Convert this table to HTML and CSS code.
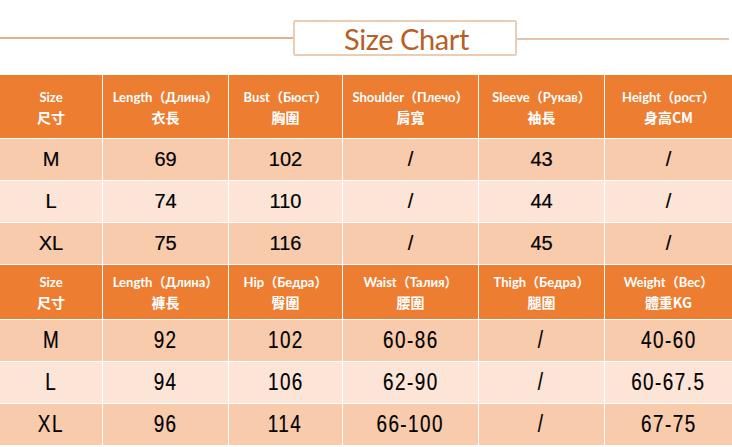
FILE: index.html
```html
<!DOCTYPE html>
<html>
<head>
<meta charset="utf-8">
<link rel="stylesheet" href="styles.css">
</head>
<body>
<div class="title-row">
  <div class="rule rule-left"></div>
  <div class="title-box">Size Chart</div>
  <div class="rule rule-right"></div>
</div>
<div class="table">
  <div class="hd hd1"><span>Size</span><span class="zh">尺寸</span></div>
  <div class="hd hd1"><span>Length（Длина）</span><span class="zh">衣長</span></div>
  <div class="hd hd1"><span>Bust（Бюст）</span><span class="zh">胸圍</span></div>
  <div class="hd hd1"><span>Shoulder（Плечо）</span><span class="zh">肩寬</span></div>
  <div class="hd hd1"><span>Sleeve（Рукав）</span><span class="zh">袖長</span></div>
  <div class="hd hd1"><span>Height（рост）</span><span class="zh">身高CM</span></div>

  <div class="c dark">M</div><div class="c dark">69</div><div class="c dark">102</div><div class="c dark">/</div><div class="c dark">43</div><div class="c dark">/</div>
  <div class="c light">L</div><div class="c light">74</div><div class="c light">110</div><div class="c light">/</div><div class="c light">44</div><div class="c light">/</div>
  <div class="c dark">XL</div><div class="c dark">75</div><div class="c dark">116</div><div class="c dark">/</div><div class="c dark">45</div><div class="c dark">/</div>

  <div class="hd hd2"><span>Size</span><span class="zh">尺寸</span></div>
  <div class="hd hd2"><span>Length（Длина）</span><span class="zh">褲長</span></div>
  <div class="hd hd2"><span>Hip（Бедра）</span><span class="zh">臀圍</span></div>
  <div class="hd hd2"><span>Waist（Талия）</span><span class="zh">腰圍</span></div>
  <div class="hd hd2"><span>Thigh（Бедра）</span><span class="zh">腿圍</span></div>
  <div class="hd hd2"><span>Weight（Вес）</span><span class="zh">體重KG</span></div>

  <div class="c dark"><span class="n">M</span></div><div class="c dark"><span class="n">92</span></div><div class="c dark"><span class="n">102</span></div><div class="c dark"><span class="n">60-86</span></div><div class="c dark"><span class="n">/</span></div><div class="c dark"><span class="n">40-60</span></div>
  <div class="c light"><span class="n">L</span></div><div class="c light"><span class="n">94</span></div><div class="c light"><span class="n">106</span></div><div class="c light"><span class="n">62-90</span></div><div class="c light"><span class="n">/</span></div><div class="c light"><span class="n">60-67.5</span></div>
  <div class="c dark"><span class="n">XL</span></div><div class="c dark"><span class="n">96</span></div><div class="c dark"><span class="n">114</span></div><div class="c dark"><span class="n">66-100</span></div><div class="c dark"><span class="n">/</span></div><div class="c dark"><span class="n">67-75</span></div>
</div>
</body>
</html>
```
FILE: styles.css
```css
html, body {
  margin: 0;
  padding: 0;
  background: #ffffff;
}
body {
  width: 732px;
  height: 447px;
  overflow: hidden;
}
.title-row {
  display: flex;
  align-items: center;
  height: 36px;
  padding-top: 20px;
  padding-right: 3px;
}
.rule {
  height: 2px;
  background: #e2b08c;
}
.rule-left {
  width: 293px;
  margin-top: -1px;
}
.rule-right {
  flex: 1;
  margin-top: 1px;
  background: #e8c4a6;
}
.title-box {
  width: 217px;
  height: 32px;
  border: 2px solid #ebcdb6;
  border-radius: 2px;
  display: flex;
  align-items: center;
  justify-content: center;
  font-family: "Lato", "Open Sans", sans-serif;
  font-size: 29px;
  color: #b65f27;
  letter-spacing: -0.4px;
  padding-left: 3px;
  box-sizing: content-box;
}
.table {
  margin-top: 19px;
  display: grid;
  grid-template-columns: 102px 125px 113px 135px 125px 127px;
  grid-template-rows: 63px 41px 41px 41px 54px 41px 41px 41px;
  gap: 1px;
  background: #ffffff;
}
.hd {
  background: #ed7d31;
  color: #ffffff;
  font-family: "Lato", "Open Sans", "Noto Sans CJK TC", sans-serif;
  font-weight: 700;
  font-size: 13px;
  line-height: 19px;
  text-align: center;
  display: flex;
  flex-direction: column;
  align-items: center;
  justify-content: center;
  white-space: nowrap;
}
.hd .zh {
  font-family: "Noto Sans CJK TC", "Lato", sans-serif;
  font-size: 14px;
  font-weight: 700;
  line-height: 20px;
}
.hd1 {
  padding-top: 2px;
}
.c {
  display: flex;
  align-items: center;
  justify-content: center;
  font-family: "Liberation Sans", Arial, sans-serif;
  font-size: 20px;
  color: #000000;
  -webkit-text-stroke: 0.2px #000;
}
.n {
  display: inline-block;
  font-size: 23px;
  letter-spacing: 1.8px;
  transform: scaleX(0.82);
}
.dark {
  background: #f8cbad;
}
.light {
  background: #fce4d6;
}
```
